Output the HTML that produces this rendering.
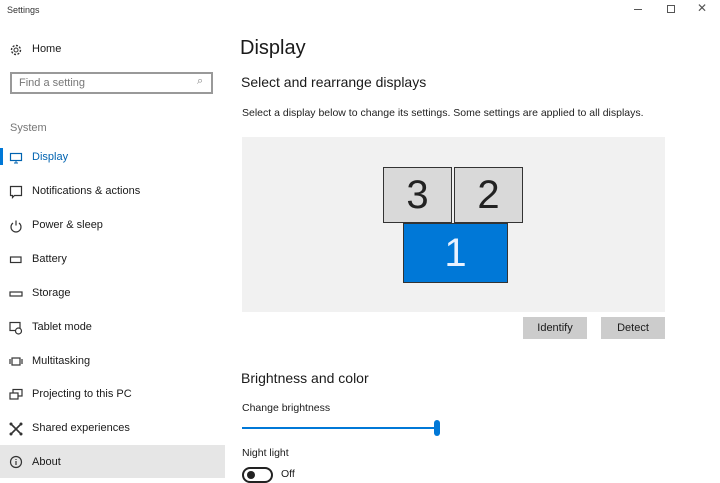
<!DOCTYPE html>
<html><head><meta charset="utf-8"><style>
*{margin:0;padding:0;box-sizing:border-box}
body{width:720px;height:478px;background:#fff;font-family:"Liberation Sans",sans-serif;color:#1a1a1a;position:relative;overflow:hidden}
.a{position:absolute;white-space:nowrap}
.nav{position:absolute;left:0;width:225px;height:34px;font-size:11px}
.nav svg{position:absolute;left:9px;top:4px}
.nav span{position:absolute;left:32px;top:4px}
.btn{position:absolute;background:#cccccc;font-size:11px;text-align:center;line-height:22px;height:22px}
</style></head><body>
<div class="a" style="left:7px;top:5px;font-size:9px;color:#333">Settings</div>
<div class="a" style="left:634px;top:9px;width:8px;height:1px;background:#555"></div>
<div class="a" style="left:667px;top:5px;width:8px;height:8px;border:1px solid #555"></div>
<div class="a" style="left:697px;top:1px;font-size:12px;color:#555">✕</div>

<div class="nav" style="top:39px"><svg width="14" height="14" viewBox="0 0 14 14"><circle cx="7" cy="7" r="4.5" fill="none" stroke="#333" stroke-width="1.4" stroke-dasharray="2 1.5"/><circle cx="7" cy="7" r="2" fill="none" stroke="#333"/></svg><span>Home</span></div>
<div class="a" style="left:10px;top:72px;width:203px;height:22px;border:2px solid #999"></div>
<div class="a" style="left:19px;top:77px;font-size:11px;color:#777">Find a setting</div>
<div class="a" style="left:197px;top:75px;font-size:11px;color:#888">⌕</div>
<div class="a" style="left:10px;top:122px;font-size:11px;color:#777">System</div>

<div class="a" style="left:0;top:148px;width:3px;height:17px;background:#0078d7"></div>
<div class="nav" style="top:147px;color:#0063b1"><svg width="14" height="14" viewBox="0 0 14 14"><rect x="1.5" y="2.5" width="11" height="7" fill="none" stroke="#0063b1" stroke-width="1.2"/><path d="M5 12h4M7 9.5v2.5" stroke="#0063b1"/></svg><span>Display</span></div>
<div class="nav" style="top:181px"><svg width="14" height="14" viewBox="0 0 14 14"><path d="M1.5 1.5h11v9h-7l-2 2v-2h-2z" fill="none" stroke="#333" stroke-width="1.2"/></svg><span>Notifications &amp; actions</span></div>
<div class="nav" style="top:215px"><svg width="14" height="14" viewBox="0 0 14 14"><path d="M4 4a5 5 0 1 0 6 0M7 1.5v5" fill="none" stroke="#333" stroke-width="1.2"/></svg><span>Power &amp; sleep</span></div>
<div class="nav" style="top:249px"><svg width="14" height="14" viewBox="0 0 14 14"><rect x="1.5" y="4" width="10.5" height="5.5" fill="none" stroke="#333" stroke-width="1.2"/></svg><span>Battery</span></div>
<div class="nav" style="top:283px"><svg width="14" height="14" viewBox="0 0 14 14"><rect x="1" y="5" width="12" height="4" fill="none" stroke="#333" stroke-width="1.2"/></svg><span>Storage</span></div>
<div class="nav" style="top:317px"><svg width="14" height="14" viewBox="0 0 14 14"><rect x="1" y="1.5" width="10" height="8" fill="none" stroke="#333" stroke-width="1.2"/><circle cx="9.5" cy="10" r="3" fill="#fff" stroke="#333" stroke-width="1.2"/></svg><span>Tablet mode</span></div>
<div class="nav" style="top:351px"><svg width="14" height="14" viewBox="0 0 14 14"><rect x="3" y="3" width="8" height="7" fill="none" stroke="#333" stroke-width="1.2"/><path d="M1 4v5M13 4v5" stroke="#333" stroke-width="1.2"/></svg><span>Multitasking</span></div>
<div class="nav" style="top:384px"><svg width="14" height="14" viewBox="0 0 14 14"><rect x="4" y="1.5" width="9" height="6.5" fill="none" stroke="#333" stroke-width="1.2"/><rect x="1" y="5" width="8" height="6" fill="#fff" stroke="#333" stroke-width="1.2"/></svg><span>Projecting to this PC</span></div>
<div class="nav" style="top:418px"><svg width="14" height="14" viewBox="0 0 14 14"><path d="M2 2l10 10M12 2L2 12" stroke="#333" stroke-width="1.6"/><circle cx="2" cy="2" r="1.5" fill="#333"/><circle cx="12" cy="2" r="1.5" fill="#333"/><circle cx="2" cy="12" r="1.5" fill="#333"/><circle cx="12" cy="12" r="1.5" fill="#333"/></svg><span>Shared experiences</span></div>
<div class="nav" style="top:445px;height:33px;background:#e6e6e6"><svg width="14" height="14" viewBox="0 0 14 14" style="top:10px"><circle cx="7" cy="7" r="5.5" fill="none" stroke="#333" stroke-width="1.2"/><path d="M7 6v4M7 4v1" stroke="#333" stroke-width="1.2"/></svg><span style="top:11px">About</span></div>

<div class="a" style="left:240px;top:37px;font-size:20px">Display</div>
<div class="a" style="left:241px;top:74px;font-size:14px">Select and rearrange displays</div>
<div class="a" style="left:242px;top:107px;font-size:10.5px;color:#222">Select a display below to change its settings. Some settings are applied to all displays.</div>
<div class="a" style="left:242px;top:137px;width:423px;height:175px;background:#f1f1f1"></div>
<div class="a" style="left:383px;top:167px;width:69px;height:56px;background:#d9d9d9;border:1px solid #333;font-size:40px;text-align:center;line-height:54px;color:#222">3</div>
<div class="a" style="left:454px;top:167px;width:69px;height:56px;background:#d9d9d9;border:1px solid #333;font-size:40px;text-align:center;line-height:54px;color:#222">2</div>
<div class="a" style="left:403px;top:223px;width:105px;height:60px;background:#0078d7;border:1px solid #333;font-size:40px;text-align:center;line-height:58px;color:#e8f2ff">1</div>
<div class="btn" style="left:523px;top:317px;width:64px">Identify</div>
<div class="btn" style="left:601px;top:317px;width:64px">Detect</div>
<div class="a" style="left:241px;top:370px;font-size:14px">Brightness and color</div>
<div class="a" style="left:242px;top:402px;font-size:10.5px">Change brightness</div>
<div class="a" style="left:242px;top:427px;width:194px;height:2px;background:#0078d7"></div>
<div class="a" style="left:434px;top:420px;width:6px;height:16px;border-radius:3px;background:#0078d7"></div>
<div class="a" style="left:242px;top:447px;font-size:10.5px">Night light</div>
<div class="a" style="left:242px;top:467px;width:31px;height:16px;border:2px solid #222;border-radius:8px"></div>
<div class="a" style="left:247px;top:471px;width:8px;height:8px;border-radius:4px;background:#222"></div>
<div class="a" style="left:281px;top:468px;font-size:10.5px">Off</div>
</body></html>
